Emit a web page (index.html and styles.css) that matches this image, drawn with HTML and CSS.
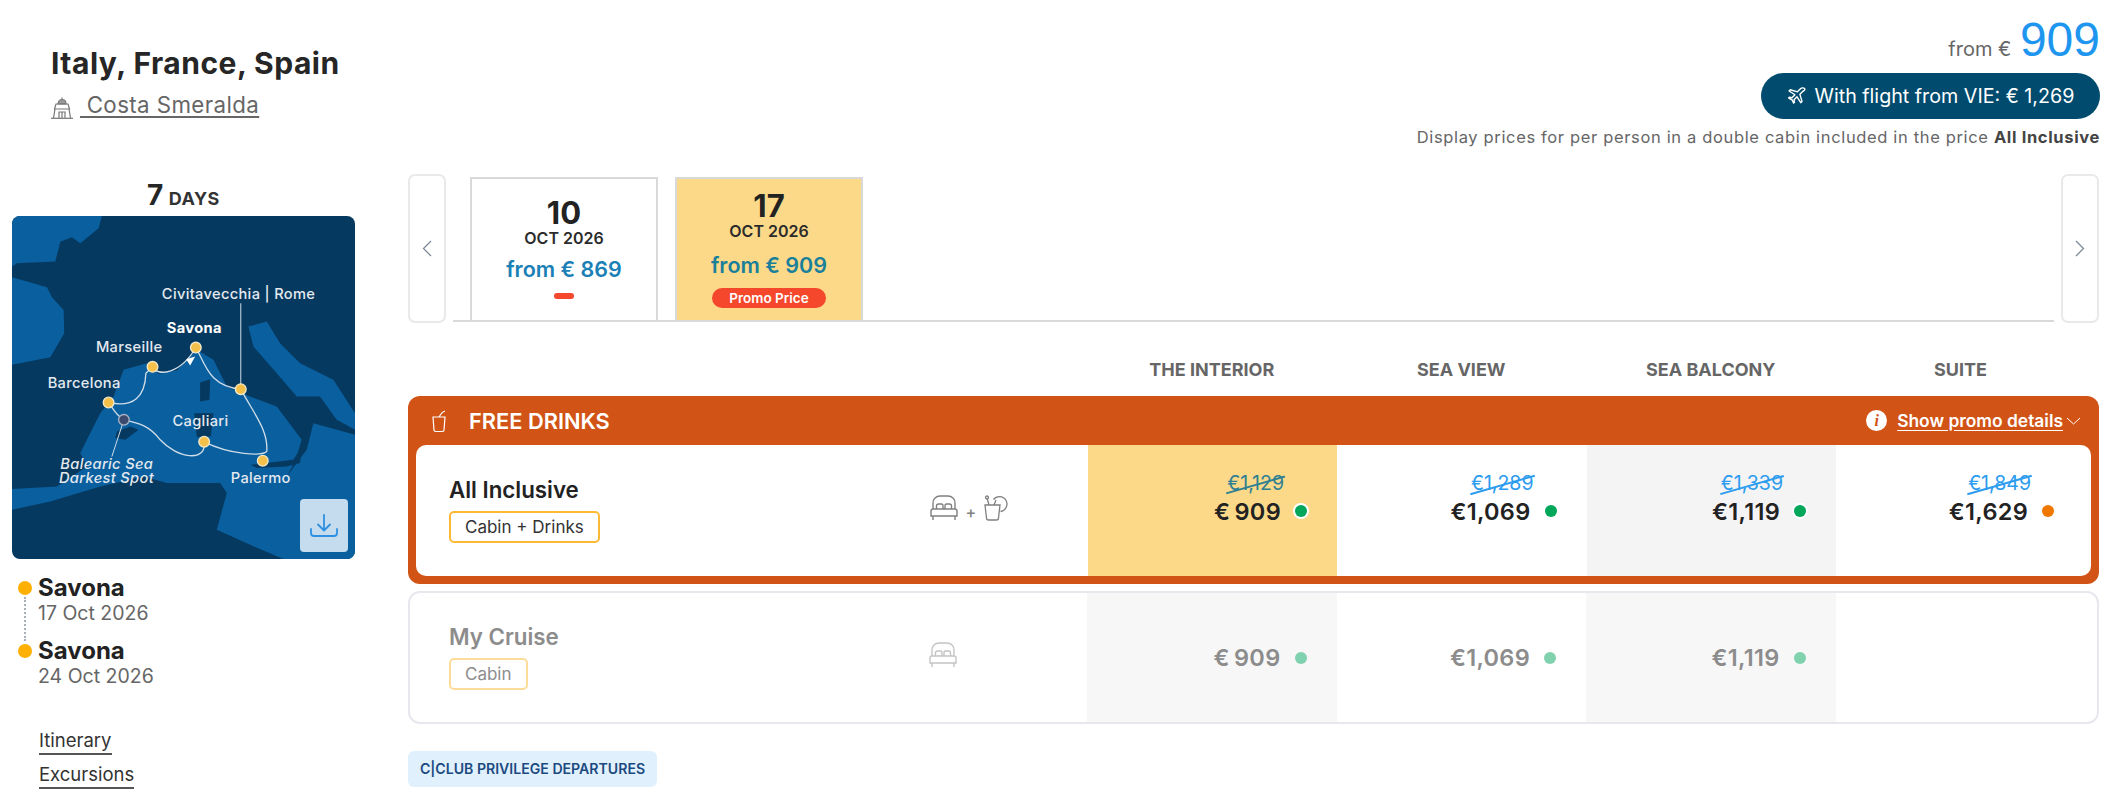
FILE: index.html
```html
<!DOCTYPE html>
<html lang="en">
<head>
  <meta charset="UTF-8">
  <title>Italy, France, Spain - Costa Smeralda</title>
  <link rel="stylesheet" href="styles.css">
</head>
<body>
<div class="page">
  <!-- header -->
  <header class="top">
    <div class="cruise-info">
      <h1 class="cruise-title">Italy, France, Spain</h1>
      <div class="ship">
        <svg class="ship-icon" viewBox="0 0 22 22" fill="none" stroke="#777" stroke-width="1.2">
          <path d="M11 0.5v2M7 7c0-3 2-4.500 4-4.500s4 1.500 4 4.500z" fill="#999"/>
          <path d="M5 7h12l1.500 5h-15zM4 12l-1.500 9M18 12l1.500 9M8 21v-6h6v6M11 15v6"/>
          <path d="M0 21.300h22"/>
        </svg>
        <a class="ship-link">&nbsp;Costa Smeralda</a>
      </div>
    </div>
    <div class="price-info">
      <div class="from-line"><span class="from-label">from €</span> <span class="from-price">909</span></div>
      <div class="flight-pill">
        <svg class="plane-icon" viewBox="0 0 24 24" fill="none" stroke="#fff" stroke-width="1.700" stroke-linejoin="round">
          <path d="M21 3c-1.500-1.500-4-.5-5.500 1L12.500 7 4 4.500 2.500 6l7 4.500-3.500 3.500-3-.5L2 14.500l4 2 2 4 1-1-.5-3 3.500-3.500 4.500 7 1.500-1.500L15.500 10l3-3c1.500-1.500 4-2.500 2.500-4z"/>
        </svg>
        <span>With flight from VIE: € 1,269</span>
      </div>
      <p class="price-note">Display prices for per person in a double cabin included in the price <b>All Inclusive</b></p>
    </div>
  </header>

  <div class="main">
    <!-- left column -->
    <aside class="side">
      <div class="days"><b>7</b> DAYS</div>
      <div class="map">
        <svg class="map-svg" viewBox="35 48 1030 1030">
          <rect x="35" y="48" width="1030" height="1030" fill="#06395f"/>
          <g fill="#0a5f9f">
            <path d="M35 48H305L295 85 240 130 215 112 180 125 165 185 50 190 35 200z"/>
            <path d="M35 232L140 262 155 292 190 330 192 400 150 472 35 495z"/>
            <path d="M745 380L800 365 840 430 900 490 1000 540 1065 640V690L1010 660 960 590 890 590 830 520 760 440z"/>
            <path d="M35 868L170 860 260 800 240 760 300 640 340 590 370 510 440 490 475 522 530 512 590 450 640 480 680 560 750 590 830 620 905 720 885 785 860 830 920 750 940 670 1065 705V1078H850L760 1040 650 990 680 880 660 850 500 850 430 830 300 860 150 905 35 930z"/>
          </g>
          <g fill="#06395f">
            <path d="M600 548L630 538 628 600 600 605z"/>
            <path d="M582 640L640 640 632 710 590 712z"/>
            <path d="M350 695L390 680 415 690 375 720 345 715z"/>
            <path d="M752 795L880 780 905 740 900 790 860 800 770 805z"/>
          </g>
          <g fill="none" stroke="#cfdde8" stroke-width="4">
            <path d="M587 443C615 490 625 560 722 568C760 640 805 690 800 755C790 770 690 765 612 726C620 790 530 775 480 720C450 680 420 670 371 660C350 650 340 630 325 608C400 625 435 590 437 520L457 501C470 530 540 525 587 443"/>
            <path d="M722 310V568M371 660L335 770" stroke-width="3"/>
          </g>
          <path d="M558 478L585 470 570 497z" fill="#fff"/>
          <g fill="#f5c04a" stroke="#f3e9c8" stroke-width="4">
            <circle cx="587" cy="443" r="16"/>
            <circle cx="457" cy="501" r="16"/>
            <circle cx="325" cy="608" r="16"/>
            <circle cx="722" cy="568" r="16"/>
            <circle cx="788" cy="783" r="16"/>
            <circle cx="612" cy="726" r="16"/>
          </g>
          <circle cx="371" cy="660" r="16" fill="#3c4a6e" stroke="#aab4c4" stroke-width="4"/>
          <g class="map-text">
            <text x="485" y="297">Civitavecchia | Rome</text>
            <text x="500" y="398" class="map-bold">Savona</text>
            <text x="287" y="457">Marseille</text>
            <text x="142" y="566">Barcelona</text>
            <text x="517" y="680">Cagliari</text>
            <text x="692" y="850">Palermo</text>
            <text x="180" y="807" class="map-italic">Balearic Sea</text>
            <text x="176" y="851" class="map-italic">Darkest Spot</text>
          </g>
        </svg>
        <div class="map-download">
          <svg viewBox="0 0 28 24" width="28" height="24" fill="none" stroke="#2f8fe0" stroke-width="1.800" stroke-linecap="round" stroke-linejoin="round">
            <path d="M14 1v15M8 10.500l6 6 6-6M1 15v4c0 2 1 3 3 3h20c2 0 3-1 3-3v-4"/>
          </svg>
        </div>
      </div>
      <div class="stops">
        <div class="stop"><span class="stop-name">Savona</span><span class="stop-date">17 Oct 2026</span></div>
        <div class="stop"><span class="stop-name">Savona</span><span class="stop-date">24 Oct 2026</span></div>
      </div>
      <ul class="side-links">
        <li><a>Itinerary</a></li>
        <li><a>Excursions</a></li>
      </ul>
    </aside>

    <!-- right column -->
    <section class="content">
      <div class="dates">
        <button class="arrow">
          <svg viewBox="0 0 10 17" width="10" height="17" fill="none" stroke="#7d8a99" stroke-width="1.300"><path d="M9 1L1.500 8.500 9 16"/></svg>
        </button>
        <div class="tabs">
          <div class="tab">
            <div class="tab-day">10</div>
            <div class="tab-month">OCT 2026</div>
            <div class="tab-from">from € 869</div>
            <div class="tab-dash"></div>
          </div>
          <div class="tab tab-active">
            <div class="tab-day">17</div>
            <div class="tab-month">OCT 2026</div>
            <div class="tab-from">from € 909</div>
            <div class="tab-promo">Promo Price</div>
          </div>
        </div>
        <button class="arrow">
          <svg viewBox="0 0 10 17" width="10" height="17" fill="none" stroke="#7d8a99" stroke-width="1.300"><path d="M1 1l7.500 7.500L1 16"/></svg>
        </button>
      </div>

      <div class="cabin-heads">
        <div></div>
        <div>THE INTERIOR</div>
        <div>SEA VIEW</div>
        <div>SEA BALCONY</div>
        <div>SUITE</div>
      </div>

      <div class="promo-card">
        <div class="promo-head">
          <div class="promo-title">
            <svg viewBox="0 0 16 22" width="16" height="22" fill="none" stroke="#fff" stroke-width="1.200"><path d="M2 7h12l-1 13c0 1-1 1.500-2 1.500H5c-1 0-2-.5-2-1.500zM8 7l2-3c.5-1 1.500-2 4-3"/></svg>
            <span>FREE DRINKS</span>
          </div>
          <div class="promo-details">
            <span class="info-dot">i</span>
            <a>Show promo details</a>
            <svg viewBox="0 0 15 8" width="15" height="8" fill="none" stroke="#fff" stroke-width="1"><path d="M1 1l6.500 6L14 1"/></svg>
          </div>
        </div>
        <div class="row row-promo">
          <div class="plan">
            <div class="plan-name">All Inclusive</div>
            <span class="plan-tag">Cabin + Drinks</span>
          </div>
          <div class="plan-icons">
            <svg class="bed" viewBox="0 0 28 26" fill="none" stroke="#808080" stroke-width="1.400"><path d="M3 14V8c0-4 3-7 7-7h8c4 0 7 3 7 7v6M6.500 14v-3c0-1 .5-2 2-2h3c1 0 1.500 1 1.500 2v3M15 14v-3c0-1 .5-2 1.500-2h3c1.500 0 2 1 2 2v3M1 21v-5c0-1 1-2 2-2h22c1 0 2 1 2 2v5zM3 21v4M25 21v4"/></svg>
            <span class="plus">+</span>
            <svg class="glass" viewBox="0 0 28 26" fill="none" stroke="#808080" stroke-width="1.300"><path d="M2 10h15l-1.500 13c0 1-1 2-2 2h-8c-1 0-2-1-2-2zM6 10L4 3M11 10l2-5"/><circle cx="4" cy="2.500" r="1.500"/><path d="M17.500 16.500a7.500 7.500 0 1 0-7-12"/></svg>
          </div>
          <div class="price-cell cell-yellow">
            <div class="old-price old-dark">€1,129</div>
            <div class="now-price">€&thinsp;909<i class="dot dot-green dot-ring"></i></div>
          </div>
          <div class="price-cell">
            <div class="old-price">€1,289</div>
            <div class="now-price">€1,069<i class="dot dot-green"></i></div>
          </div>
          <div class="price-cell cell-gray">
            <div class="old-price">€1,339</div>
            <div class="now-price">€1,119<i class="dot dot-green dot-ring"></i></div>
          </div>
          <div class="price-cell cell-last">
            <div class="old-price">€1,849</div>
            <div class="now-price">€1,629<i class="dot dot-orange"></i></div>
          </div>
        </div>
      </div>

      <div class="row row-cruise">
        <div class="plan">
          <div class="plan-name">My Cruise</div>
          <span class="plan-tag">Cabin</span>
        </div>
        <div class="plan-icons">
          <svg class="bed" viewBox="0 0 28 26" fill="none" stroke="#c4c4c4" stroke-width="1.400"><path d="M3 14V8c0-4 3-7 7-7h8c4 0 7 3 7 7v6M6.500 14v-3c0-1 .5-2 2-2h3c1 0 1.500 1 1.500 2v3M15 14v-3c0-1 .5-2 1.500-2h3c1.500 0 2 1 2 2v3M1 21v-5c0-1 1-2 2-2h22c1 0 2 1 2 2v5zM3 21v4M25 21v4"/></svg>
        </div>
        <div class="price-cell cell-light">
          <div class="now-price">€&thinsp;909<i class="dot dot-soft"></i></div>
        </div>
        <div class="price-cell">
          <div class="now-price">€1,069<i class="dot dot-soft"></i></div>
        </div>
        <div class="price-cell cell-light">
          <div class="now-price">€1,119<i class="dot dot-soft"></i></div>
        </div>
        <div class="price-cell"></div>
      </div>

      <div class="club-tag">C|CLUB PRIVILEGE DEPARTURES</div>
    </section>
  </div>
</div>
</body>
</html>
```
FILE: styles.css
```css
/* global */
body {
  margin: 0;
  background: #fff;
  font-family: "Inter", "Noto Sans", sans-serif;
  color: #222;
}
a {
  color: inherit;
}
.page {
  padding: 0 15px 0 12px;
}

/* header */
.top {
  display: flex;
  justify-content: space-between;
  height: 174px;
  margin-right: -1px;
}
.cruise-info {
  padding: 45px 0 0 39px;
}
.cruise-title {
  margin: 0;
  font-size: 30px;
  line-height: 36px;
  font-weight: 700;
  letter-spacing: 0.5px;
  color: #262626;
}
.ship {
  display: flex;
  align-items: flex-start;
  margin-top: 12px;
  font-size: 22.300px;
  letter-spacing: 0.4px;
  color: #666;
}
.ship-icon {
  width: 22px;
  height: 22px;
  margin: 4px 7px 0 0;
}
.ship-link {
  text-decoration: underline;
  text-underline-offset: 3px;
  line-height: 24px;
}
.price-info {
  display: flex;
  flex-direction: column;
  align-items: flex-end;
  padding-top: 16px;
}
.from-line {
  height: 57px;
  white-space: nowrap;
}
.from-label {
  font-size: 20px;
  color: #666;
}
.from-price {
  margin-left: 4px;
  font-family: "Liberation Sans", sans-serif;
  font-size: 48px;
  line-height: 48px;
  color: #1e96f0;
}
.flight-pill {
  display: flex;
  align-items: center;
  justify-content: center;
  gap: 8px;
  width: 339px;
  height: 46px;
  border-radius: 23px;
  background: #004b6e;
  color: #fff;
  font-size: 19.700px;
}
.plane-icon {
  width: 20px;
  height: 20px;
}
.price-note {
  margin: 9px 0 0;
  font-size: 16.500px;
  line-height: 18px;
  color: #666;
  letter-spacing: 0.65px;
}
.price-note b {
  color: #444;
}

/* layout */
.main {
  display: flex;
  gap: 53px;
}
.side {
  width: 343px;
  flex-shrink: 0;
}
.content {
  flex: 1;
  min-width: 0;
}

/* sidebar */
.days {
  margin-top: 7px;
  height: 35px;
  text-align: center;
  font-size: 18px;
  font-weight: 700;
  letter-spacing: 0.5px;
  line-height: 28px;
  color: #333;
}
.days b {
  font-size: 28px;
  font-weight: 700;
  color: #262626;
}
.map {
  position: relative;
  width: 343px;
  height: 343px;
  border-radius: 8px;
  overflow: hidden;
}
.map-svg {
  display: block;
  width: 100%;
  height: 100%;
}
.map-text text {
  font-family: "Inter", sans-serif;
  font-size: 44px;
  font-weight: 500;
  letter-spacing: 1px;
  fill: #e3e9ef;
}
.map-text .map-bold {
  font-weight: 700;
  fill: #fff;
}
.map-text .map-italic {
  font-style: italic;
}
.map-download {
  position: absolute;
  right: 7px;
  bottom: 7px;
  display: flex;
  align-items: center;
  justify-content: center;
  width: 48px;
  height: 53px;
  border-radius: 4px;
  background: #c4dcee;
}
.stops {
  margin-top: 16px;
  padding-left: 26px;
}
.stop {
  position: relative;
  display: flex;
  flex-direction: column;
  height: 63px;
}
.stop::before {
  content: "";
  position: absolute;
  left: -20px;
  top: 6px;
  width: 14px;
  height: 14px;
  border-radius: 50%;
  background: #ffb000;
}
.stop:first-child::after {
  content: "";
  position: absolute;
  left: -14px;
  top: 22px;
  height: 44px;
  border-left: 2px dotted #a9b0b8;
}
.stop-name {
  font-size: 24px;
  font-weight: 700;
  line-height: 26px;
  color: #222;
}
.stop-date {
  font-size: 19.500px;
  line-height: 24px;
  color: #666;
}
.side-links {
  list-style: none;
  margin: 28px 0 0;
  padding: 0 0 0 27px;
  font-size: 18.500px;
  line-height: 22px;
  color: #333;
}
.side-links li {
  height: 34px;
}
.side-links a {
  display: inline-block;
  padding-bottom: 2px;
  border-bottom: 2px solid #555;
}

/* date tabs */
.dates {
  display: flex;
  gap: 7px;
}
.arrow {
  flex-shrink: 0;
  display: flex;
  align-items: center;
  justify-content: center;
  width: 38px;
  height: 149px;
  padding: 0;
  background: #fff;
  border: 2px solid #e9e9e9;
  border-radius: 7px;
}
.tabs {
  flex: 1;
  display: flex;
  gap: 17px;
  height: 143px;
  margin-top: 3px;
  padding-left: 17px;
  border-bottom: 2px solid #d9d9d9;
}
.tab {
  box-sizing: border-box;
  display: flex;
  flex-direction: column;
  align-items: center;
  width: 188px;
  height: 143px;
  padding-top: 18px;
  border: 2px solid #d9d9d9;
  border-bottom: 0;
  text-align: center;
}
.tab-active {
  padding-top: 11px;
  background: #fbd989;
}
.tab-day {
  font-size: 31px;
  font-weight: 700;
  line-height: 31px;
  color: #222;
}
.tab-month {
  font-size: 16px;
  font-weight: 600;
  line-height: 20px;
  color: #2b2b2b;
}
.tab-from {
  margin-top: 8px;
  font-size: 21.500px;
  font-weight: 600;
  line-height: 26px;
  color: #1a80b5;
}
.tab-active .tab-from {
  margin-top: 11px;
  color: #1a7f9a;
}
.tab-dash {
  width: 20px;
  height: 6px;
  margin-top: 11px;
  border-radius: 3px;
  background: #f4472b;
}
.tab-promo {
  width: 114px;
  height: 20px;
  margin-top: 10px;
  border-radius: 10px;
  background: #f4472b;
  color: #fff;
  font-size: 13.500px;
  font-weight: 600;
  line-height: 20px;
}

/* cabin table */
.cabin-heads {
  display: grid;
  grid-template-columns: 1fr 249.500px 249.500px 249.500px 263.500px;
  height: 73px;
  line-height: 94px;
  font-size: 18px;
  font-weight: 700;
  color: #666;
  text-align: center;
}
.cabin-heads div:last-child {
  padding-right: 13.500px;
}
.promo-card {
  height: 188px;
  box-sizing: border-box;
  padding: 0 8px 8px;
  border-radius: 12px;
  background: #d15315;
}
.promo-head {
  display: flex;
  align-items: center;
  justify-content: space-between;
  height: 49px;
  color: #fff;
}
.promo-title {
  display: flex;
  align-items: center;
  gap: 22px;
  padding-left: 15px;
  font-size: 21.800px;
  font-weight: 600;
}
.promo-details {
  display: flex;
  align-items: center;
  gap: 10px;
  padding-right: 10px;
  font-size: 17.400px;
  font-weight: 600;
}
.promo-details a {
  text-decoration: underline;
  text-underline-offset: 3px;
}
.promo-details svg {
  margin-left: -7px;
}
.info-dot {
  width: 21px;
  height: 21px;
  border-radius: 50%;
  background: #fff;
  color: #d15315;
  font-family: "Liberation Serif", serif;
  font-style: italic;
  font-weight: 700;
  font-size: 16px;
  line-height: 21px;
  text-align: center;
}
.row {
  display: grid;
  grid-template-columns: 1fr 249.500px 249.500px 249.500px 255px;
  background: #fff;
}
.row-promo {
  height: 131px;
  border-radius: 10px;
  overflow: hidden;
}
.row-cruise {
  box-sizing: border-box;
  height: 133px;
  margin-top: 7px;
  padding-right: 6.500px;
  border: 2px solid #e6e8ee;
  border-radius: 12px;
  overflow: hidden;
}
.plan {
  grid-column: 1;
  grid-row: 1;
  display: flex;
  flex-direction: column;
  align-items: flex-start;
  width: 480px;
  padding: 32px 0 0 33px;
}
.row-cruise .plan {
  padding: 31px 0 0 39px;
}
.plan-name {
  font-size: 22.300px;
  font-weight: 600;
  line-height: 26px;
  color: #222;
}
.plan-tag {
  margin-top: 8px;
  padding: 0 14px;
  height: 32px;
  box-sizing: border-box;
  border: 2px solid #fdb935;
  border-radius: 5px;
  font-size: 17px;
  line-height: 28px;
  color: #333;
}
.row-cruise .plan-name {
  color: #8c8c8c;
}
.row-cruise .plan-tag {
  border-color: #fddc9a;
  color: #8c8c8c;
}
.plan-icons {
  grid-column: 1;
  grid-row: 1;
  justify-self: end;
  display: flex;
  align-items: center;
  width: 158px;
  margin-top: -6px;
}
.bed {
  width: 28px;
  height: 26px;
}
.plus {
  margin: 8px 7px 0 8px;
  font-size: 16px;
  font-weight: 500;
  color: #808080;
}
.glass {
  width: 28px;
  height: 26px;
}

/* price cells */
.price-cell {
  display: flex;
  flex-direction: column;
  align-items: flex-end;
  box-sizing: border-box;
  padding: 28px 30px 0 0;
}
.row-cruise .price-cell {
  justify-content: center;
  padding-top: 0;
}
.cell-yellow {
  background: #fbd989;
}
.cell-gray {
  background: #f4f4f4;
}
.cell-light {
  background: #f7f7f7;
}
.cell-last {
  padding-right: 37px;
}
.old-price {
  position: relative;
  height: 20px;
  margin: 0 23px 8px 0;
  font-size: 19.500px;
  line-height: 20px;
  color: #2d9cef;
}
.old-price::after {
  content: "";
  position: absolute;
  left: -2px;
  right: -2px;
  top: 11px;
  height: 1.500px;
  background: currentColor;
  transform: rotate(-16deg);
}
.old-dark {
  color: #2f7f93;
}
.now-price {
  display: flex;
  align-items: center;
  height: 20px;
  font-size: 23.500px;
  font-weight: 600;
  letter-spacing: 0.3px;
  color: #222;
  white-space: nowrap;
}
.row-cruise .now-price {
  color: #8c8c8c;
}
.dot {
  width: 12px;
  height: 12px;
  margin-left: 14px;
  border-radius: 50%;
}
.dot-green {
  background: #00a65a;
}
.dot-orange {
  background: #f07800;
}
.dot-soft {
  background: #7fd2ad;
}
.dot-ring {
  box-shadow: 0 0 0 2px #fff;
}

.club-tag {
  width: 249px;
  height: 36px;
  margin-top: 27px;
  border-radius: 6px;
  background: #e0f1fd;
  color: #1c4a80;
  font-size: 14.100px;
  font-weight: 600;
  line-height: 36px;
  text-align: center;
}
```
